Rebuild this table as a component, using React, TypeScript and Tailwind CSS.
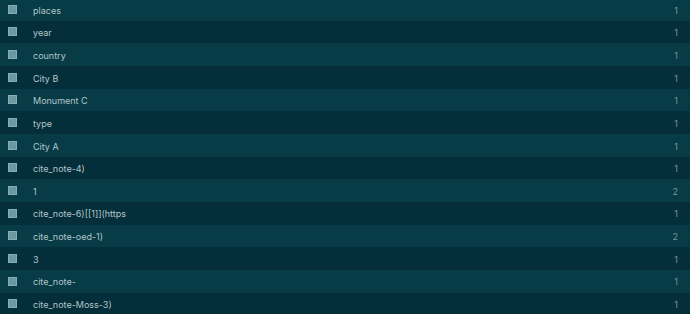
const rows: [string, number][] = [
  ['places', 1],
  ['year', 1],
  ['country', 1],
  ['City B', 1],
  ['Monument C', 1],
  ['type', 1],
  ['City A', 1],
  ['cite_note-4)', 1],
  ['1', 2],
  ['cite_note-6)[[1]](https', 1],
  ['cite_note-oed-1)', 2],
  ['3', 1],
  ['cite_note-', 1],
  ['cite_note-Moss-3)', 1],
];

export default function App() {
  return (
    <div className="w-[690px] h-[314px] overflow-hidden bg-[#042e3a] font-['Inter',sans-serif]">
      <div className="-mt-[2px]">
        {rows.map(([label, count], i) => (
          <div
            key={i}
            className={`flex items-center h-[22.67px] pl-[8px] pr-[12px] ${
              i % 2 === 0 ? 'bg-[#073c46]' : 'bg-[#042e3a]'
            }`}
          >
            <span className="w-[9px] h-[9px] bg-[#6b98a1] border border-[#86aeb5] shrink-0" />
            <span className="ml-[16px] pt-[2px] flex-1 text-[9px] text-[#b3c6ca] truncate">{label}</span>
            <span className="pt-[2px] text-[9px] text-[#7d9399]">{count}</span>
          </div>
        ))}
      </div>
    </div>
  );
}
